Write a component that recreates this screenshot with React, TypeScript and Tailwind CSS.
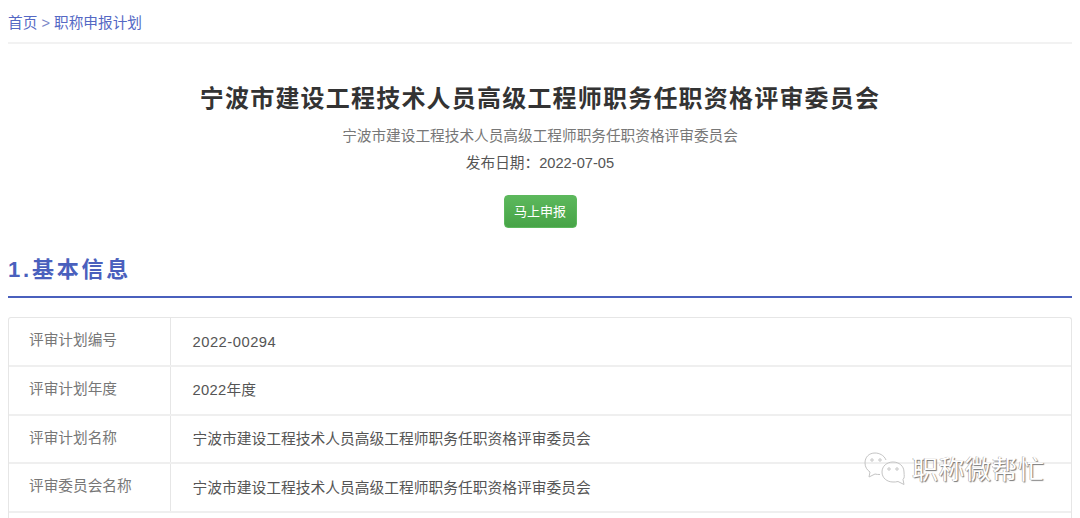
const font = { fontFamily: '"Liberation Sans", "Noto Sans CJK SC", sans-serif' };
const T = "宁波市建设工程技术人员高级工程师职务任职资格评审委员会";
const rows: [string, React.ReactNode][] = [
  ["评审计划编号", <span className="tracking-[0.5px]">2022-00294</span>],
  ["评审计划年度", <><span className="tracking-[0.3px]">2022</span>年度</>],
  ["评审计划名称", T],
  ["评审委员会名称", T],
];

function Row({ k, v }: { k: string; v: React.ReactNode }) {
  return (
    <div className="flex h-[48.75px] shrink-0 border-b-2 border-[#efefef]">
      <div className="w-[162px] shrink-0 border-r border-[#e6e6e6] pl-[20px] pt-[11px] text-[14.67px] leading-[22px] text-[#777777]">{k}</div>
      <div className="flex-1 pl-[21.5px] pt-[12.5px] text-[14.75px] leading-[22px] text-[#555555]">{v}</div>
    </div>
  );
}

export default function App() {
  return (
    <div style={font} className="relative h-[518px] w-[1080px] overflow-hidden bg-white">
      <div className="px-[8px]">
        <div className="h-[44px] border-b-2 border-[#f2f2f2] pt-[13px] text-[14.67px] leading-[20px] text-[#5468c4]">
          首页 <span className="text-[#7a86c8]">&gt;</span> 职称申报计划
        </div>
        <h1 className="mt-[40px] text-center text-[24px] font-bold leading-[30px] tracking-[1.2px] text-[#333333]">{T}</h1>
        <p className="mt-[11px] text-center text-[14.67px] leading-[22px] text-[#777777]">{T}</p>
        <p className="mt-[5px] text-center text-[14.67px] leading-[22px] text-[#555555]">发布日期：2022-07-05</p>
        <div className="mt-[21px] flex justify-center">
          <div className="flex h-[33px] w-[73px] items-center justify-center rounded-[4px] border border-[#5cb85c] bg-gradient-to-b from-[#5cb85c] to-[#47a447] text-[13px] text-white">马上申报</div>
        </div>
        <h2 className="mt-[26px] h-[44px] border-b-2 border-[#4a60bd] pt-[1px] text-[22px] font-bold leading-[30px] tracking-[2.8px] text-[#4a60bd]">1.基本信息</h2>
        <div className="mt-[19px] flex h-[240px] flex-col rounded-t-[3px] border-x border-t border-[#e6e6e6]">
          {rows.map(([k, v]) => <Row key={k} k={k} v={v} />)}
        </div>
      </div>
      <div className="absolute left-[864px] top-[451px] flex items-center gap-[8px]">
        <svg width="62" height="36" viewBox="0 0 62 36" fill="none" stroke="#c4c4c4" strokeWidth="1">
          <path d="M22 9C20 4 15 2 11 2 5 2 1 6 1 12c0 4 2 7 5 9l-1 5 6-3c2 .5 3 .5 5 .5" />
          <path d="M40 21c0-6-5-10-11-10s-11 4-11 10 5 10 11 10c2 0 3 0 5-.5l6 3-1-5c2-2 1-4 1-7.500z" />
          <circle cx="8" cy="9" r="1.200" />
          <circle cx="16" cy="9" r="1.200" />
          <circle cx="25" cy="18" r="1.200" />
          <circle cx="33" cy="18" r="1.200" />
        </svg>
      </div>
      <div className="absolute left-[912px] top-[453px] text-[26px] leading-[34px] tracking-[0.5px] text-white" style={{ textShadow: "1px 1px 1px #777, -0.5px -0.5px 0 #999" }}>职称微帮忙</div>
    </div>
  );
}
